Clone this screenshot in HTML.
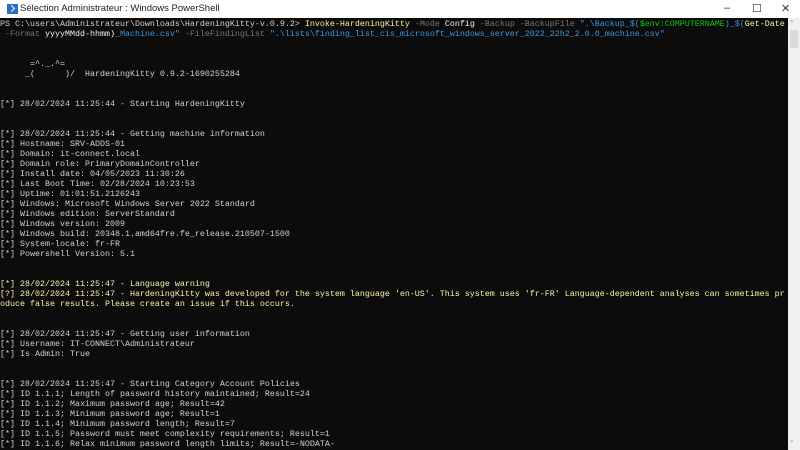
<!DOCTYPE html>
<html><head><meta charset="utf-8"><style>
*{margin:0;padding:0;box-sizing:border-box}
body{width:800px;height:450px;overflow:hidden;background:#0c0c0c;position:relative}
#title{position:absolute;left:0;top:0;width:800px;height:18px;background:#fff;font-family:"Liberation Sans",sans-serif;font-size:9.5px;color:#222}
#title .t{position:absolute;left:20px;top:3px}
#title .ic{position:absolute;left:7px;top:4px;width:11px;height:10px;background:#2c6ec6}
#title .ic:after{content:"";position:absolute;left:2px;top:2px;width:4px;height:4px;border-right:1.5px solid #fff;border-bottom:1.5px solid #fff;transform:rotate(-45deg)}
.ctl{position:absolute;top:2px;font-size:11px;color:#333}
#con{position:absolute;left:0;top:19px;width:788px;height:431px;overflow:hidden;font-family:"Liberation Mono",monospace;font-size:8.33px;line-height:10px;color:#d0d0d0;white-space:pre}
#sb{position:absolute;left:788px;top:18px;width:12px;height:432px;background:#f0f0f0;font-family:"DejaVu Sans",sans-serif;font-size:7px;color:#777}
#sb .th{position:absolute;left:2px;top:12px;width:8px;height:18px;background:#dadada}
.y{color:#f9f1a5}.g{color:#767676}.w{color:#f2f2f2}.b{color:#3a96dd}.gr{color:#16c60c}
</style></head><body>
<div id="title"><div class="ic"></div><span class="t">Sélection Administrateur : Windows PowerShell</span>
<span class="ctl" style="left:724px">–</span><span class="ctl" style="left:752px">☐</span><span class="ctl" style="left:781px">✕</span></div>
<div id="con">PS C:\users\Administrateur\Downloads\HardeningKitty-v.0.9.2&gt; <span class="y">Invoke-HardeningKitty</span> <span class="g">-Mode</span> <span class="w">Config</span> <span class="g">-Backup -BackupFile</span> <span class="b">".\Backup_$(</span><span class="gr">$env:COMPUTERNAME</span><span class="b">)_$(</span><span class="y">Get-Date</span>
<span class="g"> -Format</span> <span class="w">yyyyMMdd-hhmm)</span><span class="b">_Machine.csv"</span> <span class="g">-FileFindingList</span> <span class="b">".\lists\finding_list_cis_microsoft_windows_server_2022_22h2_2.0.0_machine.csv"</span>


      =^._.^=
     _(      )/  HardeningKitty 0.9.2-1690255284


[*] 28/02/2024 11:25:44 - Starting HardeningKitty


[*] 28/02/2024 11:25:44 - Getting machine information
[*] Hostname: SRV-ADDS-01
[*] Domain: it-connect.local
[*] Domain role: PrimaryDomainController
[*] Install date: 04/05/2023 11:30:26
[*] Last Boot Time: 02/28/2024 10:23:53
[*] Uptime: 01:01:51.2126243
[*] Windows: Microsoft Windows Server 2022 Standard
[*] Windows edition: ServerStandard
[*] Windows version: 2009
[*] Windows build: 20348.1.amd64fre.fe_release.210507-1500
[*] System-locale: fr-FR
[*] Powershell Version: 5.1


<span class="y">[*] 28/02/2024 11:25:47 - Language warning
[?] 28/02/2024 11:25:47 - HardeningKitty was developed for the system language 'en-US'. This system uses 'fr-FR' Language-dependent analyses can sometimes pr
oduce false results. Please create an issue if this occurs.</span>


[*] 28/02/2024 11:25:47 - Getting user information
[*] Username: IT-CONNECT\Administrateur
[*] Is Admin: True


[*] 28/02/2024 11:25:47 - Starting Category Account Policies
[*] ID 1.1.1; Length of password history maintained; Result=24
[*] ID 1.1.2; Maximum password age; Result=42
[*] ID 1.1.3; Minimum password age; Result=1
[*] ID 1.1.4; Minimum password length; Result=7
[*] ID 1.1.5; Password must meet complexity requirements; Result=1
[*] ID 1.1.6; Relax minimum password length limits; Result=-NODATA-</div>
<div id="sb"><span style="position:absolute;left:2px;top:2px">˄</span><div class="th"></div><span style="position:absolute;left:2px;bottom:2px">˅</span></div>
</body></html>
